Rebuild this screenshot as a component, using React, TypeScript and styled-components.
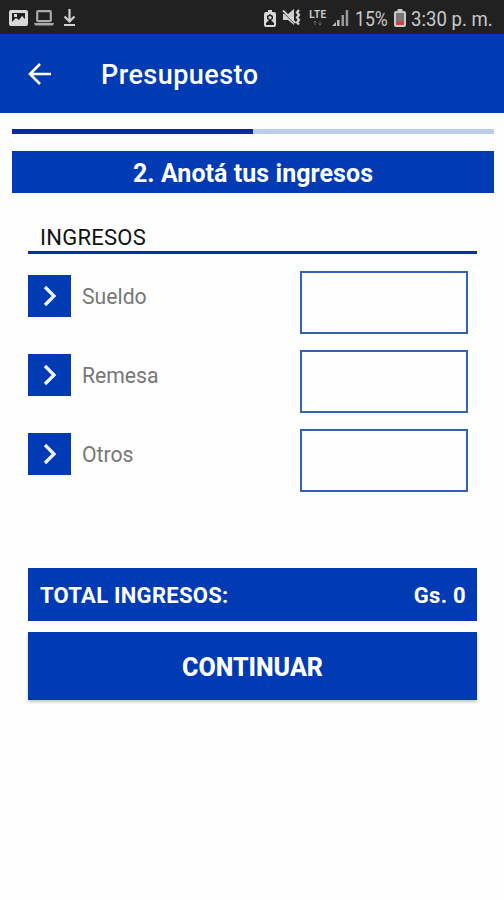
import React from "react";
import styled, { createGlobalStyle } from "styled-components";

const BLUE = "#003bb3";

const GlobalStyle = createGlobalStyle`
  * { box-sizing: border-box; }
  body { margin: 0; background: #fefefe; font-family: Roboto, "Noto Sans", sans-serif; }
`;

const Screen = styled.div`
  width: 504px;
  height: 900px;
  overflow: hidden;
  background: #fefefe;
`;

const StatusBar = styled.div`
  display: flex;
  align-items: center;
  height: 34px;
  padding: 2px 0 0 9px;
  background: #212121;
  color: #c9c9c9;
`;

const StatusIcon = styled.svg<{ $gap?: number }>`
  display: block;
  flex: none;
  margin-left: ${(p) => p.$gap ?? 0}px;
`;

const StatusText = styled.span<{ $width: number; $gap: number; $scale: number }>`
  width: ${(p) => p.$width}px;
  margin-left: ${(p) => p.$gap}px;
  padding-top: 1px;
  font-size: 21px;
  line-height: 30px;
  white-space: nowrap;
  transform: scaleX(${(p) => p.$scale});
  transform-origin: left center;
`;

const Network = styled.span`
  display: flex;
  flex-direction: column;
  align-items: center;
  width: 20px;
  margin-left: 6px;
  font-size: 10px;
  font-weight: 700;
  letter-spacing: 0.4px;
  line-height: 10px;
`;

const AppBar = styled.header`
  display: flex;
  align-items: center;
  height: 79px;
  padding: 1px 0 0 28px;
  background: ${BLUE};
  color: #fff;
`;

const AppTitle = styled.h1`
  margin: 2px 0 0 49px;
  font-size: 27px;
  font-weight: 500;
  letter-spacing: 0.45px;
`;

const Content = styled.main`
  padding: 16px 10px 0 12px;
`;

const Progress = styled.div`
  height: 5px;
  background: #bccde9;
`;

const ProgressFill = styled.div`
  width: 50%;
  height: 100%;
  background: #0029ab;
`;

const StepTitle = styled.h2`
  display: flex;
  align-items: center;
  justify-content: center;
  height: 42px;
  margin: 17px 0 0;
  padding-top: 3px;
  background: ${BLUE};
  color: #fff;
  font-size: 25px;
  font-weight: 700;
  letter-spacing: 0.05px;
`;

const Form = styled.section`
  padding: 0 17px 0 16px;
`;

const SectionTitle = styled.h3`
  height: 61px;
  margin: 0 0 17px;
  padding: 32px 0 0 12px;
  border-bottom: 3px solid #0a2fa5;
  color: #111;
  font-size: 22px;
  font-weight: 400;
  letter-spacing: 0.25px;
  line-height: 26px;
`;

const IncomeRow = styled.div`
  display: flex;
  align-items: flex-start;
  height: 63px;
  margin-bottom: 16px;
  padding-right: 9px;
`;

const ExpandButton = styled.button`
  display: flex;
  align-items: center;
  justify-content: center;
  width: 43px;
  height: 42px;
  margin-top: 4px;
  padding: 0;
  border: 0;
  background: ${BLUE};
`;

const RowLabel = styled.label`
  flex: 1;
  margin: 13px 0 0 11px;
  color: #777;
  font-size: 21.2px;
  line-height: 26px;
`;

const AmountInput = styled.input`
  width: 168px;
  height: 63px;
  padding: 0 12px;
  border: 2px solid #3463b2;
  border-radius: 0;
  background: #fefefe;
  font: 22px Roboto, sans-serif;
`;

const TotalBar = styled.div`
  display: flex;
  align-items: center;
  justify-content: space-between;
  height: 53px;
  margin-top: 76px;
  padding: 2px 11px 0 12px;
  background: ${BLUE};
  color: #fff;
  font-size: 22px;
  font-weight: 700;
  letter-spacing: 0.28px;
`;

const ContinueButton = styled.button`
  display: flex;
  align-items: center;
  justify-content: center;
  width: 100%;
  height: 68px;
  margin-top: 11px;
  padding: 2px 0 0;
  border: 0;
  background: ${BLUE};
  box-shadow: 0 2px 3px rgba(0, 0, 0, 0.24);
  color: #fff;
  font: 800 25px Roboto, sans-serif;
`;

const ROWS = ["Sueldo", "Remesa", "Otros"];

export default function App() {
  return (
    <Screen>
      <GlobalStyle />
      <StatusBar>
        <StatusIcon width="19" height="16" viewBox="0 0 19 16">
          <path fill="#d8d8d8" fillRule="evenodd" d="M2 0h15q2 0 2 2v12q0 2-2 2H2q-2 0-2-2V2Q0 0 2 0ZM3 3v9l4-4 3 2 3-4 3 3V3ZM5 4h3v3H5Z" />
        </StatusIcon>
        <StatusIcon $gap={6} width="20" height="16" viewBox="0 0 20 16">
          <rect x="3.2" y="1.2" width="13.6" height="10" rx="1" fill="none" stroke="#aaa" strokeWidth="2.2" />
          <path d="M0 13h20l-1 2.5H1Z" fill="#aaa" />
        </StatusIcon>
        <StatusIcon $gap={9} width="13" height="18" viewBox="0 0 13 18">
          <path d="M6.5 0v12M1.5 7.5l5 5 5-5M1 16h11" fill="none" stroke="#d0d0d0" strokeWidth="2.2" />
        </StatusIcon>
        <StatusIcon $gap={188} width="12" height="17" viewBox="0 0 12 17">
          <path fill="#d8d8d8" fillRule="evenodd" d="M4 0h4v2h2q2 0 2 2v11q0 2-2 2H2q-2 0-2-2V4q0-2 2-2h2ZM6 4 3 6v3l2 1-3 3v2h8v-2l-3-3 2-1V6Z" />
          <circle cx="6" cy="7.5" r="1.6" fill="#d8d8d8" />
        </StatusIcon>
        <StatusIcon $gap={6} width="20" height="18" viewBox="0 0 20 18">
          <path d="M1 5h5l6-5v16l-6-5H1Z" fill="#d0d0d0" />
          <path d="m1 3.2 12 12" stroke="#212121" strokeWidth="1" />
          <path d="m1 1.5 12.5 12.5" stroke="#d0d0d0" strokeWidth="1.8" />
          <path d="m17 1-2 2.5 2 2.5-2 2.5 2 2.5-2 2.5 2 2" fill="none" stroke="#d0d0d0" strokeWidth="2.3" />
        </StatusIcon>
        <Network>
          LTE
          <svg width="12" height="6" viewBox="0 0 12 6">
            <path d="M3 5V1M1.5 2.5 3 1l1.5 1.5M8 1v4M6.5 3.5 8 5l1.5-1.5" fill="none" stroke="#686868" strokeWidth="1" />
          </svg>
        </Network>
        <StatusIcon $gap={4} width="17" height="16" viewBox="0 0 17 16">
          <path d="M0 16h4v-4ZM5 10h2.5v6H5Z" fill="#bbb" />
          <path d="M9.5 5H12v11H9.5ZM13.7 0h2.5v16h-2.5Z" fill="#999" />
        </StatusIcon>
        <StatusText $width={33} $gap={6} $scale={0.84}>15%</StatusText>
        <StatusIcon $gap={6} width="12" height="18" viewBox="0 0 12 18">
          <path d="M3.5 0h5v2H10q2 0 2 2v12q0 2-2 2H2q-2 0-2-2V4q0-2 2-2h1.5Z" fill="#c9c9c9" />
          <path d="M2 4h8v9H2Z" fill="#777" />
          <path d="M2 12h8v4H2Z" fill="#c94545" />
        </StatusIcon>
        <StatusText $width={83} $gap={5} $scale={0.885}>3:30 p. m.</StatusText>
      </StatusBar>
      <AppBar>
        <svg width="24" height="24" viewBox="0 0 24 24" aria-label="Volver">
          <path d="M12 2 2 12l10 10M2 12h21" fill="none" stroke="#fff" strokeWidth="2.6" />
        </svg>
        <AppTitle>Presupuesto</AppTitle>
      </AppBar>
      <Content>
        <Progress><ProgressFill /></Progress>
        <StepTitle>2. Anotá tus ingresos</StepTitle>
        <Form>
          <SectionTitle>INGRESOS</SectionTitle>
          {ROWS.map((name) => (
            <IncomeRow key={name}>
              <ExpandButton aria-label={name}>
                <svg width="14" height="22" viewBox="0 0 14 22">
                  <path d="m2 2 9 9-9 9" fill="none" stroke="#f1f6ff" strokeWidth="3.3" />
                </svg>
              </ExpandButton>
              <RowLabel htmlFor={name}>{name}</RowLabel>
              <AmountInput id={name} />
            </IncomeRow>
          ))}
          <TotalBar>
            <span>TOTAL INGRESOS:</span>
            <span>Gs. 0</span>
          </TotalBar>
          <ContinueButton>CONTINUAR</ContinueButton>
        </Form>
      </Content>
    </Screen>
  );
}
